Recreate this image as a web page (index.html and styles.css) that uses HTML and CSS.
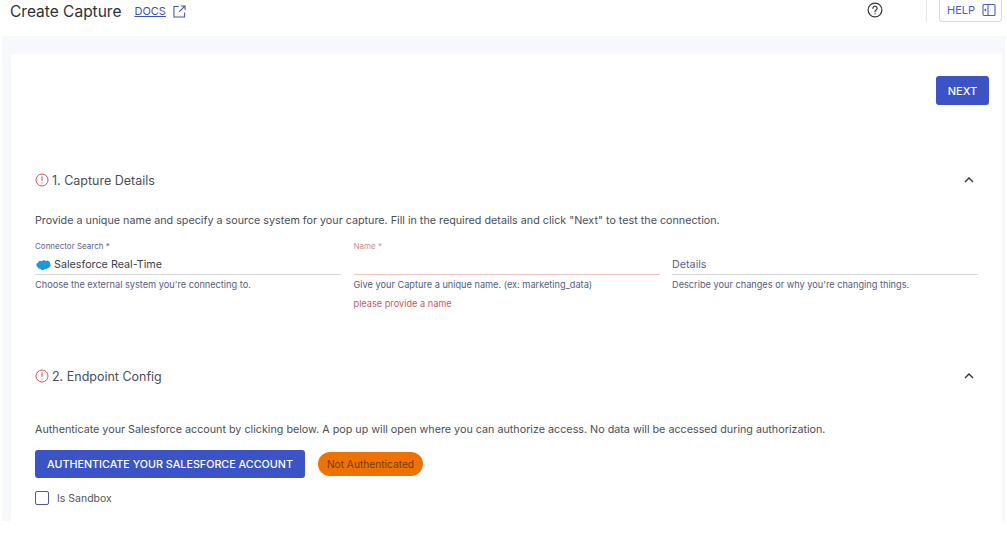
FILE: index.html
```html
<!DOCTYPE html>
<html lang="en">
<head>
    <meta charset="UTF-8">
    <meta name="viewport" content="width=device-width, initial-scale=1.0">
    <link rel="stylesheet" href="styles.css">
    <title>Create Capture</title>
</head>
<body>
    <header class="topbar">
        <div class="topbar-left">
            <h1 class="page-title">Create Capture</h1>
            <a class="docs-link" href="#">DOCS</a>
            <svg class="docs-icon" viewBox="0 0 14 14" width="13" height="13" fill="none" stroke="#3f51b5" stroke-width="1.1">
                <path d="M6 1.500H1v11.500h11.500V8"/>
                <path d="M8.500 1h4.500v4.500M13 1L6.500 7.500"/>
            </svg>
        </div>
        <div class="topbar-right">
            <svg class="help-icon" viewBox="0 0 16 16" width="16" height="16" fill="none" stroke="#333" stroke-width="1.200">
                <circle cx="8" cy="8" r="6.900"/>
                <path d="M5.900 6.300a2.100 2.100 0 1 1 3.200 1.800c-.7.400-1.100.8-1.100 1.600" stroke-linecap="round"/>
                <circle cx="8" cy="11.700" r=".6" fill="#333" stroke="none"/>
            </svg>
            <div class="topbar-divider"></div>
            <button class="help-button">
                HELP
                <svg viewBox="0 0 14 14" width="14" height="14" fill="none" stroke="#4a60c4" stroke-width="1.100">
                    <rect x="1" y="1.500" width="12" height="11" rx="1"/>
                    <path d="M6 1.500v11M4 6L2.800 7 4 8"/>
                </svg>
            </button>
        </div>
    </header>

    <main class="content">
        <div class="card">
            <div class="actions">
                <button class="primary-button next-button">NEXT</button>
            </div>

            <section class="section section-details">
                <div class="section-head">
                    <svg class="error-icon" viewBox="0 0 14 14" width="14" height="14" fill="none" stroke="#d9534f" stroke-width="1">
                        <circle cx="7" cy="7" r="6"/>
                        <path d="M7 3.600v4.200M7 9.400v1" stroke-width="1.100"/>
                    </svg>
                    <h2>1. Capture Details</h2>
                    <svg class="chevron" viewBox="0 0 10 6" width="10" height="6" fill="none" stroke="#333" stroke-width="1.400">
                        <path d="M1 5l4-4 4 4"/>
                    </svg>
                </div>
                <p class="section-text">Provide a unique name and specify a source system for your capture. Fill in the required details and click "Next" to test the connection.</p>
                <div class="fields">
                    <div class="field">
                        <label class="field-label">Connector Search *</label>
                        <div class="field-input">
                            <svg class="sf-logo" viewBox="0 0 16 11" width="16" height="10">
                                <path fill="#1b9ad6" d="M6.600 1.500A2.800 2.800 0 0 1 11 1a3.200 3.200 0 0 1 4.800 3 3 3 0 0 1-2.600 4.700 2.400 2.400 0 0 1-3.200 1 2.800 2.800 0 0 1-5-.2A2.500 2.500 0 0 1 2 7.700 2.600 2.600 0 0 1 2.500 3 2.900 2.900 0 0 1 6.600 1.500z"/>
                            </svg>
                            <span>Salesforce Real-Time</span>
                        </div>
                        <p class="field-help">Choose the external system you're connecting to.</p>
                    </div>
                    <div class="field field-error">
                        <label class="field-label">Name *</label>
                        <div class="field-input"></div>
                        <p class="field-help">Give your Capture a unique name. (ex: marketing_data)</p>
                        <p class="field-message">please provide a name</p>
                    </div>
                    <div class="field">
                        <label class="field-label">&nbsp;</label>
                        <div class="field-input placeholder">Details</div>
                        <p class="field-help">Describe your changes or why you're changing things.</p>
                    </div>
                </div>
            </section>

            <section class="section section-endpoint">
                <div class="section-head">
                    <svg class="error-icon" viewBox="0 0 14 14" width="14" height="14" fill="none" stroke="#d9534f" stroke-width="1">
                        <circle cx="7" cy="7" r="6"/>
                        <path d="M7 3.600v4.200M7 9.400v1" stroke-width="1.100"/>
                    </svg>
                    <h2>2. Endpoint Config</h2>
                    <svg class="chevron" viewBox="0 0 10 6" width="10" height="6" fill="none" stroke="#333" stroke-width="1.400">
                        <path d="M1 5l4-4 4 4"/>
                    </svg>
                </div>
                <p class="section-text">Authenticate your Salesforce account by clicking below. A pop up will open where you can authorize access. No data will be accessed during authorization.</p>
                <div class="auth-row">
                    <button class="primary-button auth-button">AUTHENTICATE YOUR SALESFORCE ACCOUNT</button>
                    <span class="status-pill">Not Authenticated</span>
                </div>
                <label class="checkbox-row">
                    <span class="checkbox"></span>
                    Is Sandbox
                </label>
            </section>
        </div>
    </main>
</body>
</html>
```

FILE: styles.css
```css
* {
    margin: 0;
    padding: 0;
    box-sizing: border-box;
}

html, body {
    height: 533px;
    overflow: hidden;
    background-color: #fff;
}

body {
    font-family: 'Inter', sans-serif;
    color: #3a3f4b;
}

.topbar {
    height: 36px;
    display: flex;
    align-items: flex-start;
    justify-content: space-between;
    padding: 0 5px 0 10px;
}

.topbar-left {
    display: flex;
    align-items: center;
    height: 22px;
}

.page-title {
    font-size: 15.500px;
    font-weight: 400;
    color: #2b2f38;
}

.docs-link {
    margin-left: 13px;
    font-size: 11px;
    color: #3f51b5;
}

.docs-icon {
    margin-left: 7px;
}

.topbar-right {
    display: flex;
    align-items: flex-start;
}

.help-icon {
    margin-top: 2px;
}

.topbar-divider {
    width: 1px;
    height: 22px;
    margin-left: 43px;
    background-color: #e6e7ec;
}

.help-button {
    display: flex;
    align-items: center;
    gap: 7px;
    height: 22px;
    margin-left: 12px;
    padding: 0 5px 2px 7px;
    font-family: inherit;
    font-size: 11px;
    color: #4a60c4;
    background-color: #fff;
    border: 1px solid #d5d9ec;
    border-top: none;
    border-radius: 0 0 4px 4px;
}

.content {
    height: 485px;
    margin: 0 2px;
    padding: 18px 3px 0 9px;
    background-color: #f7f8fc;
}

.card {
    height: 467px;
    padding: 22px 13px 0 24px;
    background-color: #fff;
}

.actions {
    display: flex;
    justify-content: flex-end;
}

.primary-button {
    font-family: inherit;
    font-weight: 500;
    color: #fff;
    background-color: #3b53c4;
    border: none;
    border-radius: 3px;
}

.next-button {
    width: 53px;
    height: 29px;
    font-size: 11px;
}

.section-head {
    display: flex;
    align-items: center;
    height: 20px;
    padding-right: 13px;
}

.section-head h2 {
    flex: 1;
    margin-left: 3px;
    font-size: 12.500px;
    font-weight: 400;
    color: #4a4e5a;
}

.chevron {
    margin-right: 2px;
}

.section-details {
    margin-top: 65px;
}

.section-endpoint {
    margin-top: 56px;
}

.section-text {
    font-size: 10.750px;
    line-height: 16px;
    color: #4a4e5a;
}

.section-details .section-text {
    margin-top: 23px;
}

.section-endpoint .section-text {
    margin-top: 36px;
}

.fields {
    display: grid;
    grid-template-columns: repeat(3, 306px);
    column-gap: 12.500px;
    margin-top: 10px;
}

.field-label {
    display: block;
    height: 14px;
    font-size: 8px;
    line-height: 14px;
    color: #5b6390;
}

.field-input {
    display: flex;
    align-items: center;
    gap: 3px;
    height: 22px;
    padding-top: 2px;
    font-size: 10.750px;
    color: #3a3f4b;
    border-bottom: 1px solid #d4d5da;
}

.field-input.placeholder {
    color: #5b6390;
}

.field-help {
    margin-top: 4px;
    font-size: 9.200px;
    line-height: 12px;
    color: #555c85;
}

.field-message {
    margin-top: 7px;
    font-size: 9.200px;
    line-height: 12px;
    color: #c45a5f;
}

.field-error .field-label {
    color: #d08a8c;
}

.field-error .field-input {
    border-bottom-color: #eec6c6;
}

.auth-row {
    display: flex;
    align-items: center;
    gap: 13px;
    margin-top: 12px;
}

.auth-button {
    width: 270px;
    height: 28px;
    font-size: 10.750px;
}

.status-pill {
    display: flex;
    align-items: center;
    justify-content: center;
    width: 105px;
    height: 24px;
    font-size: 10.200px;
    color: #7a3a06;
    background-color: #ee7203;
    border-radius: 12px;
}

.checkbox-row {
    display: flex;
    align-items: center;
    gap: 8px;
    margin-top: 13px;
    font-size: 10.500px;
    color: #555;
}

.checkbox {
    width: 14px;
    height: 14px;
    border: 1.500px solid #4a5a9c;
    border-radius: 2px;
}
```
